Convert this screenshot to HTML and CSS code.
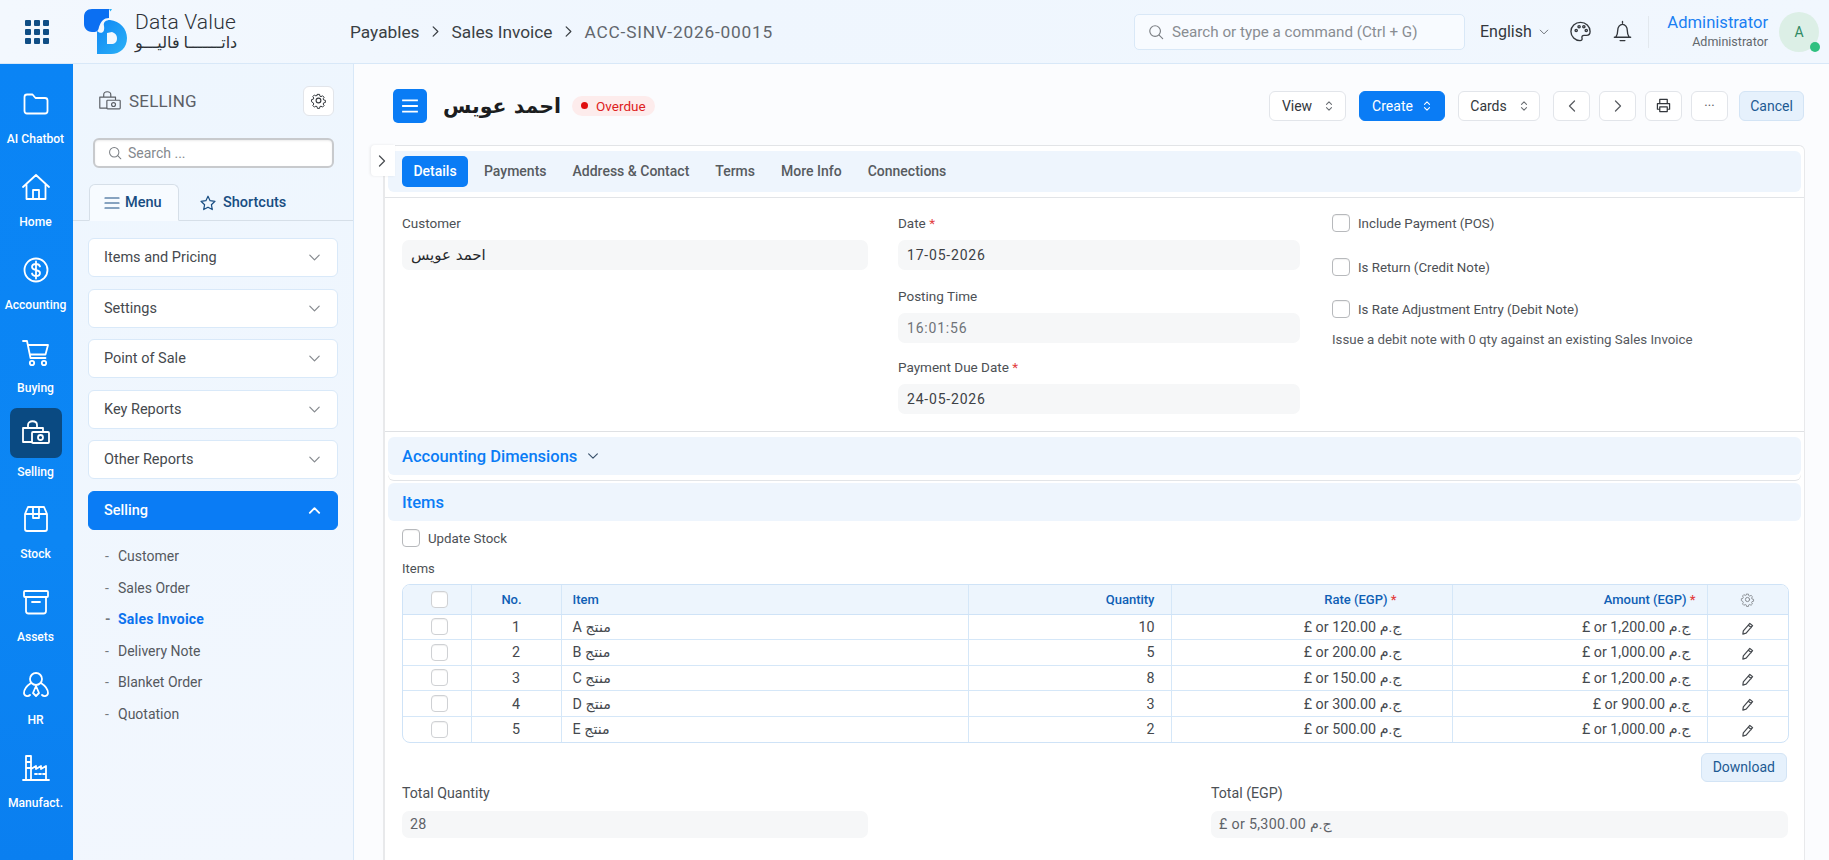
FILE: index.html
```html
<!DOCTYPE html>
<html lang="en">
<head>
    <meta charset="UTF-8">
    <meta name="viewport" content="width=device-width, initial-scale=1.0">
    <title>ACC-SINV-2026-00015</title>
    <link rel="stylesheet" href="styles.css">
</head>
<body>
    <svg class="sprite" aria-hidden="true">
        <symbol id="chev-down" viewBox="0 0 16 16"><path d="M3 5.5l5 5 5-5"/></symbol>
        <symbol id="chev-up" viewBox="0 0 16 16"><path d="M3 10.5l5-5 5 5"/></symbol>
        <symbol id="chev-right" viewBox="0 0 16 16"><path d="M5.5 3l5 5-5 5"/></symbol>
        <symbol id="chev-left" viewBox="0 0 16 16"><path d="M10.5 3l-5 5 5 5"/></symbol>
        <symbol id="updown" viewBox="0 0 12 16"><path d="M3 6l3-3 3 3M3 10l3 3 3-3"/></symbol>
        <symbol id="search" viewBox="0 0 18 18"><circle cx="8" cy="8" r="6"/><path d="M12.5 12.5l4 4"/></symbol>
        <symbol id="gear" viewBox="0 0 20 20"><circle cx="10" cy="10" r="2.8"/><path d="M8.6 2h2.8l.4 2.3 1.5.7 2-1.2 2 2-1.2 2 .6 1.5 2.3.5v2.8l-2.3.5-.6 1.5 1.2 2-2 2-2-1.2-1.5.6-.4 2.3H8.6l-.5-2.3-1.5-.6-2 1.2-2-2 1.2-2-.6-1.5L.9 11.6V8.8l2.3-.5.6-1.5-1.2-2 2-2 2 1.2 1.5-.7z" transform="translate(1 1) scale(.9)"/></symbol>
        <symbol id="pencil" viewBox="0 0 14 14"><path d="M9.5 1.5l3 2.5-7 8-3.5 1 .5-3.5zM8 3.5l3 2.5"/></symbol>
        <symbol id="selling" viewBox="0 0 30 28"><path d="M2 9h20v3M2 9v14h9M7 9V6c0-5 9-5 9 0v3"/><rect x="11" y="13" width="17" height="11" rx="1"/><circle cx="19.5" cy="18.5" r="2.5"/></symbol>
    </svg>

    <header class="topbar">
        <div class="apps-grid">
            <i></i><i></i><i></i><i></i><i></i><i></i><i></i><i></i><i></i>
        </div>
        <div class="logo">
            <svg class="logo-mark" viewBox="0 0 43 45">
                <defs>
                    <linearGradient id="logoD" x1="0" y1="0" x2="1" y2="1">
                        <stop offset="0" stop-color="#0f86f5"/>
                        <stop offset="1" stop-color="#2cb2f6"/>
                    </linearGradient>
                </defs>
                <path fill="#0b6ff2" d="M8 0H25V9C20 9 17 12 15 18C14 23 12 23 8 23C3 23 0 19 0 15V8C0 3 3 0 8 0Z"/>
                <path fill="url(#logoD)" fill-rule="evenodd" d="M13 45V22C18 26 21 23 20 17C19 13 22 11 26 11C36 12 43 20 43 29C43 39 36 45 27 45ZM23 24V35H27C31 35 33 33 33 29C33 26 31 24 28 23Z"/>
                <path fill="#2cb2f6" d="M25 0h3l-1.5 2.5z"/>
            </svg>
            <div class="logo-text">
                <div class="logo-en">Data Value</div>
                <div class="logo-ar">داتـــــــا فاليـــو</div>
            </div>
        </div>
        <nav class="breadcrumb">
            <span>Payables</span>
            <svg class="ico crumb-sep"><use href="#chev-right"/></svg>
            <span>Sales Invoice</span>
            <svg class="ico crumb-sep"><use href="#chev-right"/></svg>
            <span class="crumb-last">ACC-SINV-2026-00015</span>
        </nav>
        <div class="top-search">
            <svg class="ico search-ico"><use href="#search"/></svg>
            <span>Search or type a command (Ctrl + G)</span>
        </div>
        <div class="lang">
            <span>English</span>
            <svg class="ico lang-chev"><use href="#chev-down"/></svg>
        </div>
        <svg class="top-ico palette" viewBox="0 0 24 24">
            <path d="M12 2.5C6.5 2.5 2 6.8 2 12s4.500 9.500 9.500 9.500c1.800 0 2.500-1.200 2.100-2.500-.5-1.600.3-3 2-3h2.600c2.300 0 3.800-1.700 3.800-4C22 6.500 17.500 2.500 12 2.500z"/>
            <circle cx="7.5" cy="11" r="1.2"/><circle cx="10.5" cy="7" r="1.2"/><circle cx="15.5" cy="7" r="1.2"/><circle cx="18" cy="11" r="1.2"/>
        </svg>
        <svg class="top-ico bell" viewBox="0 0 24 24">
            <path d="M12 1.5v2M5 18c1.500-2 2-3.500 2-7 0-3.500 2.200-6.500 5-6.500s5 3 5 6.500c0 3.500.5 5 2 7zM3.500 18h17M9.500 21.500h5"/>
        </svg>
        <div class="top-divider"></div>
        <div class="user">
            <div class="user-name">Administrator</div>
            <div class="user-role">Administrator</div>
        </div>
        <div class="avatar">A<span class="avatar-dot"></span></div>
    </header>

    <div class="app">
        <aside class="rail">
            <a class="rail-item">
                <svg class="rail-ico" viewBox="0 0 28 28"><path d="M2.500 7c0-1.500 1-2.500 2.500-2.500h5.500l3 3.500H23c1.500 0 2.500 1 2.500 2.500V21c0 1.500-1 2.500-2.500 2.500H5c-1.500 0-2.500-1-2.500-2.500z"/></svg>
                <span>AI Chatbot</span>
            </a>
            <a class="rail-item">
                <svg class="rail-ico" viewBox="0 0 28 28"><path d="M1 14L14 2l13 12M4.500 11.500V26h19V11.500M11 26v-9h6v9"/></svg>
                <span>Home</span>
            </a>
            <a class="rail-item">
                <svg class="rail-ico" viewBox="0 0 28 28"><circle cx="14" cy="14" r="11.500"/><path d="M18 10.500c-.5-1.700-2-2.500-4-2.500-2.300 0-4 1.200-4 3s1.700 2.500 4 3 4 1.200 4 3-1.700 3-4 3c-2 0-3.500-.8-4-2.500M14 5.500v17"/></svg>
                <span>Accounting</span>
            </a>
            <a class="rail-item">
                <svg class="rail-ico" viewBox="0 0 28 28"><path d="M1 2h4l3.500 17h15M6 6h20l-2.500 9.500H8"/><circle cx="10" cy="24" r="2.200"/><circle cx="22" cy="24" r="2.200"/></svg>
                <span>Buying</span>
            </a>
            <a class="rail-item active">
                <span class="rail-box"><svg class="rail-ico" viewBox="0 0 30 28"><use href="#selling"/></svg></span>
                <span>Selling</span>
            </a>
            <a class="rail-item">
                <svg class="rail-ico" viewBox="0 0 28 28"><path d="M6 2h16l3 7v15c0 1-.8 2-2 2H5c-1.200 0-2-1-2-2V9zM3 9h22M11 2v11h6V2"/></svg>
                <span>Stock</span>
            </a>
            <a class="rail-item">
                <svg class="rail-ico" viewBox="0 0 28 28"><rect x="2" y="3" width="24" height="6" rx="1"/><path d="M4 9v14c0 1.500 1 2.500 2.500 2.500h15c1.500 0 2.500-1 2.500-2.500V9M10 14h8"/></svg>
                <span>Assets</span>
            </a>
            <a class="rail-item">
                <svg class="rail-ico" viewBox="0 0 28 28"><circle cx="14" cy="8" r="6"/><path d="M9 12c-3 2-7 5-7 10 0 3 4 4 6 2M19 12c3 2 7 5 7 10 0 3-4 4-6 2M14 15l-3 7 3 3 3-3z"/></svg>
                <span>HR</span>
            </a>
            <a class="rail-item">
                <svg class="rail-ico" viewBox="0 0 28 28"><path d="M1 26h26M4 26V2h5v24M4 8h5M4 14h5M9 15l5-3v3l5-3v3l5-3v14M13 20h2M17 20h2M21 20h2"/></svg>
                <span>Manufact.</span>
            </a>
        </aside>

        <aside class="side">
            <div class="side-head">
                <svg class="side-head-ico"><use href="#selling"/></svg>
                <span class="side-title">SELLING</span>
                <button class="side-gear"><svg class="ico gear-ico"><use href="#gear"/></svg></button>
            </div>
            <div class="side-search">
                <svg class="ico search-ico"><use href="#search"/></svg>
                <span>Search ...</span>
            </div>
            <div class="side-tabs">
                <div class="side-tab on">
                    <svg class="ico tab-ico" viewBox="0 0 16 16"><path d="M1 3h14M1 8h14M1 13h14"/></svg>
                    <span>Menu</span>
                </div>
                <div class="side-tab">
                    <svg class="ico tab-ico" viewBox="0 0 16 16"><path d="M8 1.200l2.100 4.500 4.900.6-3.600 3.400.9 4.900L8 12.200l-4.300 2.400.9-4.900L1 6.300l4.900-.6z"/></svg>
                    <span>Shortcuts</span>
                </div>
            </div>
            <div class="acc-list">
                <div class="acc">Items and Pricing<svg class="ico acc-chev"><use href="#chev-down"/></svg></div>
                <div class="acc">Settings<svg class="ico acc-chev"><use href="#chev-down"/></svg></div>
                <div class="acc">Point of Sale<svg class="ico acc-chev"><use href="#chev-down"/></svg></div>
                <div class="acc">Key Reports<svg class="ico acc-chev"><use href="#chev-down"/></svg></div>
                <div class="acc">Other Reports<svg class="ico acc-chev"><use href="#chev-down"/></svg></div>
                <div class="acc open">Selling<svg class="ico acc-chev"><use href="#chev-up"/></svg></div>
            </div>
            <ul class="sub-list">
                <li>Customer</li>
                <li>Sales Order</li>
                <li class="on">Sales Invoice</li>
                <li>Delivery Note</li>
                <li>Blanket Order</li>
                <li>Quotation</li>
            </ul>
        </aside>

        <main class="main">
            <div class="page-head">
                <button class="menu-btn">
                    <svg viewBox="0 0 16 16"><path d="M1 3h14M1 8h14M1 13h14"/></svg>
                </button>
                <h1 class="page-title">احمد عويس</h1>
                <span class="pill"><i></i>Overdue</span>
                <div class="actions">
                    <button class="btn view">View<svg class="ico updown"><use href="#updown"/></svg></button>
                    <button class="btn primary">Create<svg class="ico updown"><use href="#updown"/></svg></button>
                    <button class="btn cards">Cards<svg class="ico updown"><use href="#updown"/></svg></button>
                    <div class="icon-btns">
                        <button class="btn square"><svg class="ico"><use href="#chev-left"/></svg></button>
                        <button class="btn square"><svg class="ico"><use href="#chev-right"/></svg></button>
                        <button class="btn square">
                            <svg class="ico print" viewBox="0 0 16 16"><path d="M4 6V1.500h8V6M4 12H1.500V6h13v6H12M4 9.500h8v5H4z"/></svg>
                        </button>
                        <button class="btn square dots">...</button>
                    </div>
                    <button class="btn soft cancel">Cancel</button>
                </div>
            </div>

            <div class="card">
                <button class="side-toggle"><svg class="ico"><use href="#chev-right"/></svg></button>
                <div class="tabs">
                    <span class="tab on">Details</span>
                    <span class="tab">Payments</span>
                    <span class="tab">Address &amp; Contact</span>
                    <span class="tab">Terms</span>
                    <span class="tab">More Info</span>
                    <span class="tab">Connections</span>
                </div>

                <section class="form-grid">
                    <div>
                        <div class="field">
                            <label>Customer</label>
                            <div class="input ar">احمد عويس</div>
                        </div>
                    </div>
                    <div>
                        <div class="field">
                            <label>Date <em>*</em></label>
                            <div class="input">17-05-2026</div>
                        </div>
                        <div class="field">
                            <label>Posting Time</label>
                            <div class="input muted">16:01:56</div>
                        </div>
                        <div class="field">
                            <label>Payment Due Date <em>*</em></label>
                            <div class="input">24-05-2026</div>
                        </div>
                    </div>
                    <div class="checks">
                        <div class="check"><span class="box"></span>Include Payment (POS)</div>
                        <div class="check"><span class="box"></span>Is Return (Credit Note)</div>
                        <div class="check"><span class="box"></span>Is Rate Adjustment Entry (Debit Note)</div>
                        <p class="help">Issue a debit note with 0 qty against an existing Sales Invoice</p>
                    </div>
                </section>

                <div class="band collapsible">
                    Accounting Dimensions
                    <svg class="ico band-chev"><use href="#chev-down"/></svg>
                </div>

                <div class="band items-band">Items</div>

                <section class="items">
                    <div class="check update"><span class="box"></span>Update Stock</div>
                    <label class="items-label">Items</label>
                    <div class="table-wrap">
                        <table class="grid">
                            <colgroup>
                                <col class="c-check"><col class="c-no"><col class="c-item"><col class="c-qty"><col class="c-rate"><col class="c-amount"><col class="c-edit">
                            </colgroup>
                            <thead>
                                <tr>
                                    <th class="ctr pick"><span class="box"></span></th>
                                    <th class="ctr no">No.</th>
                                    <th>Item</th>
                                    <th class="num">Quantity</th>
                                    <th class="num rate">Rate (EGP) <em>*</em></th>
                                    <th class="num amount">Amount (EGP) <em>*</em></th>
                                    <th class="ctr"><svg class="ico th-gear"><use href="#gear"/></svg></th>
                                </tr>
                            </thead>
                            <tbody>
                                <tr>
                                    <td class="ctr pick"><span class="box"></span></td><td class="ctr">1</td><td>A منتج</td><td class="num">10</td>
                                    <td class="num rate">£ or 120.00 ج.م</td><td class="num">£ or 1,200.00 ج.م</td>
                                    <td class="ctr"><svg class="ico pen"><use href="#pencil"/></svg></td>
                                </tr>
                                <tr>
                                    <td class="ctr pick"><span class="box"></span></td><td class="ctr">2</td><td>B منتج</td><td class="num">5</td>
                                    <td class="num rate">£ or 200.00 ج.م</td><td class="num">£ or 1,000.00 ج.م</td>
                                    <td class="ctr"><svg class="ico pen"><use href="#pencil"/></svg></td>
                                </tr>
                                <tr>
                                    <td class="ctr pick"><span class="box"></span></td><td class="ctr">3</td><td>C منتج</td><td class="num">8</td>
                                    <td class="num rate">£ or 150.00 ج.م</td><td class="num">£ or 1,200.00 ج.م</td>
                                    <td class="ctr"><svg class="ico pen"><use href="#pencil"/></svg></td>
                                </tr>
                                <tr>
                                    <td class="ctr pick"><span class="box"></span></td><td class="ctr">4</td><td>D منتج</td><td class="num">3</td>
                                    <td class="num rate">£ or 300.00 ج.م</td><td class="num">£ or 900.00 ج.م</td>
                                    <td class="ctr"><svg class="ico pen"><use href="#pencil"/></svg></td>
                                </tr>
                                <tr>
                                    <td class="ctr pick"><span class="box"></span></td><td class="ctr">5</td><td>E منتج</td><td class="num">2</td>
                                    <td class="num rate">£ or 500.00 ج.م</td><td class="num">£ or 1,000.00 ج.م</td>
                                    <td class="ctr"><svg class="ico pen"><use href="#pencil"/></svg></td>
                                </tr>
                            </tbody>
                        </table>
                    </div>
                    <div class="grid-foot"><button class="btn soft download">Download</button></div>
                    <div class="totals">
                        <div class="field">
                            <label>Total Quantity</label>
                            <div class="input muted total">28</div>
                        </div>
                        <div class="field">
                            <label>Total (EGP)</label>
                            <div class="input muted total">£ or 5,300.00 ج.م</div>
                        </div>
                    </div>
                </section>
            </div>
        </main>
    </div>
</body>
</html>
```

FILE: styles.css
```css
* {
    margin: 0;
    padding: 0;
    box-sizing: border-box;
}

html, body {
    height: 100%;
}

body {
    font-family: Roboto, "DejaVu Sans", sans-serif;
    font-size: 14px;
    color: #3d4146;
    background: #fbfcfe;
    display: flex;
    flex-direction: column;
    overflow: hidden;
}

.sprite {
    display: none;
}

button {
    font-family: inherit;
    cursor: pointer;
}

.ico {
    width: 16px;
    height: 16px;
    fill: none;
    stroke: currentColor;
    stroke-width: 1.3;
    stroke-linecap: round;
    stroke-linejoin: round;
    flex: none;
}

/* top bar */
.topbar {
    height: 64px;
    flex: none;
    display: flex;
    align-items: center;
    background: linear-gradient(90deg, #f3f8fe 0%, #eff6fe 40%, #f1f7fe 100%);
    border-bottom: 1px solid #d8e8f8;
}

.apps-grid {
    width: 24px;
    margin-left: 25px;
    display: grid;
    grid-template-columns: repeat(3, 6px);
    gap: 3px;
}

.apps-grid i {
    height: 6px;
    background: #104e85;
    border-radius: 1px;
}

.logo {
    display: flex;
    align-items: center;
    margin-left: 35px;
    gap: 8px;
}

.logo-mark {
    width: 43px;
    height: 45px;
}

.logo-text {
    color: #2d3238;
    width: 102px;
}

.logo-en {
    font-size: 21px;
    font-weight: 300;
    line-height: 22px;
    letter-spacing: .2px;
    white-space: nowrap;
}

.logo-ar {
    font-size: 16px;
    line-height: 20px;
    white-space: nowrap;
    text-align: center;
}

.breadcrumb {
    margin-left: 113px;
    display: flex;
    align-items: center;
    font-size: 17.3px;
    color: #3a3f44;
    width: 784px;
    flex: none;
}

.crumb-sep {
    margin: 0 9px 0 8px;
    width: 15px;
    height: 15px;
}

.crumb-last {
    color: #62676d;
    letter-spacing: .8px;
}

.top-search {
    width: 331px;
    height: 36px;
    background: #f8fbff;
    border: 1px solid #d9e8f7;
    border-radius: 5px;
    display: flex;
    align-items: center;
    gap: 8px;
    padding-left: 13px;
    font-size: 15.2px;
    color: #898d92;
    flex: none;
}

.search-ico {
    color: #7b7f84;
}

.lang {
    margin-left: 15px;
    display: flex;
    align-items: center;
    gap: 6px;
    font-size: 16px;
    color: #33373c;
    width: 89px;
    flex: none;
}

.lang-chev {
    width: 12px;
    height: 12px;
    color: #6b7076;
}

.top-ico {
    width: 23px;
    height: 23px;
    fill: none;
    stroke: #33373c;
    stroke-width: 1.4;
    stroke-linecap: round;
    stroke-linejoin: round;
    flex: none;
}

.bell {
    margin-left: 19px;
}

.top-divider {
    width: 1px;
    height: 32px;
    background: #e2e8ee;
    margin-left: 14px;
}

.user {
    width: 119px;
    text-align: right;
}

.user-name {
    font-size: 16.6px;
    line-height: 20px;
    color: #1a7ff2;
    white-space: nowrap;
}

.user-role {
    font-size: 12.5px;
    line-height: 18px;
    color: #62676d;
}

.avatar {
    position: relative;
    width: 40px;
    height: 40px;
    margin-left: 11px;
    border-radius: 50%;
    background: #dcefe6;
    color: #2f8a63;
    display: flex;
    align-items: center;
    justify-content: center;
    font-size: 14px;
}

.avatar-dot {
    position: absolute;
    right: -1px;
    bottom: 0;
    width: 10px;
    height: 10px;
    border-radius: 50%;
    background: #2fc07f;
}

.app {
    flex: 1;
    display: flex;
    min-height: 0;
}

/* icon rail */
.rail {
    width: 73px;
    flex: none;
    background: linear-gradient(180deg, #0a84f5 0%, #0c86f4 60%, #0a7ff0 100%);
    padding: 26px 2px 0 0;
    color: #fff;
}

.rail-item {
    display: flex;
    flex-direction: column;
    align-items: center;
    height: 83px;
    font-size: 12.1px;
    font-weight: 500;
    white-space: nowrap;
}

.rail-ico {
    width: 28px;
    height: 28px;
    fill: none;
    stroke: #fff;
    stroke-width: 1.8;
    stroke-linecap: round;
    stroke-linejoin: round;
    margin-bottom: 14px;
    flex: none;
}

.rail-item.active {
    margin-top: -14px;
    height: 97px;
}

.rail-box {
    width: 52px;
    height: 50px;
    background: #0a4a82;
    border-radius: 7px;
    display: flex;
    align-items: center;
    justify-content: center;
    margin-bottom: 7px;
}

.rail-box .rail-ico {
    margin: 0;
    width: 30px;
}

/* module sidebar */
.side {
    width: 281px;
    flex: none;
    background: linear-gradient(170deg, #eef6fe 0%, #f2f7fe 100%);
    border-right: 1px solid #d8e8f8;
}

.side-head {
    display: flex;
    align-items: center;
    height: 29px;
    margin: 22px 19px 0 25px;
}

.side-head-ico {
    width: 24px;
    height: 22px;
    fill: none;
    stroke: #5c6066;
    stroke-width: 1.5;
    stroke-linecap: round;
    stroke-linejoin: round;
    flex: none;
}

.side-title {
    margin-left: 7px;
    font-size: 17px;
    color: #5c6066;
    letter-spacing: .2px;
}

.side-gear {
    margin-left: auto;
    width: 31px;
    height: 30px;
    background: #fff;
    border: 1px solid #e2e5ea;
    border-radius: 6px;
    display: flex;
    align-items: center;
    justify-content: center;
    color: #33373c;
}

.gear-ico {
    width: 17px;
    height: 17px;
}

.side-search {
    margin: 23px 19px 0 20px;
    height: 30px;
    background: #fff;
    border: 2px solid #c8cacd;
    border-radius: 6px;
    display: flex;
    align-items: center;
    gap: 6px;
    padding-left: 13px;
    font-size: 14px;
    color: #85898e;
    box-shadow: inset 0 1px 2px rgba(0,0,0,.08);
}

.side-search .ico {
    width: 14px;
    height: 14px;
}

.side-tabs {
    display: flex;
    margin-top: 16px;
    padding-left: 16px;
    height: 37px;
    border-bottom: 1px solid #d6dfe8;
}

.side-tab {
    display: flex;
    align-items: center;
    gap: 7px;
    height: 37px;
    padding: 0 21px 0 14px;
    font-size: 14.5px;
    font-weight: 500;
    color: #184d82;
}

.side-tab.on {
    width: 90px;
    gap: 5px;
    background: #f7fbff;
    border: 1px solid #d6dfe8;
    border-bottom-color: #f7fbff;
    border-radius: 6px 6px 0 0;
}

.tab-ico {
    width: 16px;
    height: 16px;
    stroke-width: 1.2;
}

.side-tab + .side-tab {
    padding-left: 21px;
}

.acc-list {
    margin: 17px 15px 0;
}

.acc {
    height: 39px;
    margin-bottom: 11.5px;
    background: #fff;
    border: 1px solid #d9e9f9;
    border-radius: 6px;
    display: flex;
    align-items: center;
    justify-content: space-between;
    padding: 0 15px;
    font-size: 14.5px;
    color: #45494e;
}

.acc-chev {
    color: #85898e;
    width: 15px;
    height: 15px;
}

.acc.open {
    background: #0a7cf5;
    border-color: #0a7cf5;
    color: #fff;
    font-weight: 500;
}

.acc.open .acc-chev {
    color: #fff;
    stroke-width: 2;
}

.sub-list {
    list-style: none;
    margin: 7px 0 0 32px;
}

.sub-list li {
    height: 31.6px;
    line-height: 31.6px;
    font-size: 14px;
    color: #55595e;
}

.sub-list li:before {
    content: "-";
    display: inline-block;
    width: 13px;
    color: #75797e;
}

.sub-list li.on {
    color: #0a72ee;
    font-weight: 700;
    letter-spacing: .2px;
}

/* main area */
.main {
    flex: 1;
    min-width: 0;
}

.page-head {
    height: 81px;
    padding: 2px 25px 0 39px;
    display: flex;
    align-items: center;
}

.menu-btn {
    width: 34px;
    height: 34px;
    background: #0a7cf5;
    border: none;
    border-radius: 5px;
    display: flex;
    align-items: center;
    justify-content: center;
}

.menu-btn svg {
    width: 18px;
    height: 18px;
    fill: none;
    stroke: #fff;
    stroke-width: 1.6;
}

.page-title {
    margin-left: 16px;
    font-size: 20.5px;
    font-weight: 700;
    color: #1b1d20;
    font-family: "DejaVu Sans", sans-serif;
}

.pill {
    margin-left: 11px;
    height: 20px;
    padding: 0 9px;
    background: #fdecec;
    border-radius: 10px;
    display: flex;
    align-items: center;
    gap: 8px;
    font-size: 13.5px;
    color: #dd2020;
}

.pill i {
    width: 7px;
    height: 7px;
    border-radius: 50%;
    background: #e01010;
}

.actions {
    margin-left: auto;
    display: flex;
    gap: 13px;
}

.icon-btns {
    display: flex;
    gap: 9px;
    margin-right: -2px;
}

.btn {
    height: 30px;
    padding: 0 12px 0 13px;
    background: #fff;
    border: 1px solid #e2e5ea;
    border-radius: 6px;
    display: flex;
    align-items: center;
    justify-content: center;
    gap: 9px;
    font-size: 14px;
    color: #33373c;
}

.btn.view {
    width: 77px;
    gap: 12px;
}

.btn.cards {
    width: 82px;
    gap: 12px;
}

.updown {
    width: 10px;
    height: 14px;
    color: #6a6e73;
}

.btn.primary {
    width: 86px;
    padding: 0;
    background: #0a7cf5;
    border-color: #0a7cf5;
    color: #fff;
}

.btn.primary .updown {
    color: #fff;
}

.btn.square {
    width: 37px;
    padding: 0;
    color: #5a5e63;
}

.btn.square .print {
    color: #33373c;
    width: 15px;
    height: 15px;
}

.dots {
    align-items: flex-start;
    line-height: 20px;
    font-size: 13px;
}

.btn.soft {
    background: #e6f1fc;
    border-color: #d3e4f5;
    color: #1d5a93;
}

.btn.cancel {
    width: 65px;
    padding: 0;
}

.card {
    position: relative;
    margin: 0 24px 0 29px;
    background: #fff;
    border-top: 1px solid #e2e4e7;
    border-left: 2px solid #e8e9eb;
    border-right: 1px solid #e8e9eb;
    border-radius: 6px 6px 0 0;
    height: 715px;
}

.side-toggle {
    position: absolute;
    left: -14px;
    top: -1px;
    width: 24px;
    height: 31px;
    padding-right: 2px;
    background: #fff;
    border: none;
    border-radius: 4px 0 0 4px;
    box-shadow: -1px 0 3px rgba(0,0,0,.08);
    display: flex;
    align-items: center;
    justify-content: center;
    color: #4c5055;
}

.tabs {
    height: 41px;
    margin: 5px 3px 0;
    padding-left: 14px;
    background: #eef5fd;
    border-radius: 6px;
    display: flex;
    align-items: center;
    gap: 1px;
}

.tab {
    padding: 0 12px 0 13px;
    height: 31px;
    line-height: 31px;
    font-size: 14px;
    color: #575b60;
    font-weight: 500;
    border-radius: 5px;
}

.tab.on {
    width: 66px;
    margin-right: 2px;
    padding: 0;
    text-align: center;
    background: #0a7cf5;
    color: #fff;
}

.form-grid {
    margin-top: 5px;
    border-top: 1px solid #e2e4e7;
    border-bottom: 1px solid #dfe1e4;
    height: 235px;
    padding: 15px 17px 0;
    display: grid;
    grid-template-columns: 466px 402px 1fr;
    column-gap: 30px;
}

.field {
    margin-bottom: 15px;
}

.field:first-child {
    margin-bottom: 16px;
}

.field:nth-child(2) {
    margin-bottom: 14px;
}

.field label {
    display: block;
    height: 20px;
    line-height: 20px;
    font-size: 13.5px;
    color: #4c5055;
    margin-bottom: 7px;
}

em {
    color: #e24040;
    font-style: normal;
}

.input {
    height: 30px;
    line-height: 30px;
    padding: 0 9px;
    background: #f6f7f8;
    border-radius: 7px;
    font-size: 14px;
    color: #3d4146;
    letter-spacing: .8px;
}

.input.ar {
    font-family: "DejaVu Sans", sans-serif;
    letter-spacing: 0;
    font-size: 15px;
    color: #26282b;
}

.input.muted {
    color: #6f7378;
}

.checks {
    padding-top: 1px;
    padding-left: 2px;
}

.check {
    display: flex;
    align-items: center;
    gap: 8px;
    height: 18px;
    font-size: 13.3px;
    color: #4c5055;
    margin-bottom: 26px;
}

.check + .check + .check {
    margin-bottom: 13px;
}

.check:first-child + .check {
    margin-bottom: 24px;
}

.box {
    display: inline-block;
    width: 18px;
    height: 18px;
    background: #fff;
    border: 1px solid #b7b9bc;
    border-radius: 4px;
    box-shadow: inset 0 1px 1px rgba(0,0,0,.06);
    flex: none;
}

.help {
    font-size: 13.3px;
    line-height: 18px;
    color: #55595e;
}

.band {
    margin: 5px 3px 0;
    height: 38px;
    padding-left: 14px;
    background: #eef5fd;
    border-radius: 6px;
    display: flex;
    align-items: center;
    font-size: 16.5px;
    font-weight: 500;
    color: #0a7cf5;
}

.band-chev {
    margin-left: 9px;
    width: 14px;
    height: 14px;
    color: #38506a;
}

.collapsible {
    box-shadow: 0 5px 0 #fff, 0 6px 0 #e2e4e7;
}

.items-band {
    margin-top: 8px;
    height: 38px;
}

.items {
    padding: 8px 15px 0 17px;
}

.update {
    margin-bottom: 0;
}

.items-label {
    display: block;
    margin-top: 12px;
    height: 20px;
    line-height: 20px;
    font-size: 13px;
    color: #4c5055;
}

.table-wrap {
    margin-top: 5px;
    border: 1px solid #cfe3f7;
    border-radius: 8px;
    overflow: hidden;
}

.grid {
    width: 100%;
    table-layout: fixed;
    border-collapse: collapse;
}

.c-check { width: 68px; }
.c-no { width: 90px; }
.c-item { width: 407px; }
.c-qty { width: 203px; }
.c-rate { width: 281px; }
.c-amount { width: 255px; }

.grid th {
    height: 29px;
    background: #edf5fd;
    color: #0f5fb5;
    font-size: 13px;
    font-weight: 500;
    text-align: left;
    padding: 0 11px;
    border-right: 1px solid #d5e7f8;
    border-bottom: 1px solid #cfe3f7;
}

.grid td {
    height: 25.6px;
    padding: 0 11px;
    font-size: 14.3px;
    color: #45494e;
    border-right: 1px solid #d5e7f8;
    border-bottom: 1px solid #d5e7f8;
}

.grid th:last-child, .grid td:last-child {
    border-right: none;
}

.grid tr:last-child td {
    border-bottom: none;
}

.grid .ctr {
    text-align: center;
}

.grid .pick {
    padding: 0 0 0 6px;
}

.grid .no {
    padding-right: 20px;
}

.grid .num {
    text-align: right;
    padding-right: 16px;
}

.grid th.rate {
    padding-right: 55px;
}

.grid td.rate {
    padding-right: 50px;
}

.grid .num.amount {
    padding-right: 11px;
}

.grid .box {
    display: block;
    margin: 0 auto;
    width: 17px;
    height: 17px;
    border-color: #cfd1d4;
}

.th-gear {
    width: 15px;
    height: 15px;
    color: #85898e;
    vertical-align: middle;
}

.pen {
    width: 13px;
    height: 13px;
    color: #45494e;
    vertical-align: middle;
}

.grid-foot {
    display: flex;
    justify-content: flex-end;
    margin-top: 10px;
    padding-right: 2px;
}

.btn.download {
    height: 29px;
    padding: 0 11px;
    font-size: 14px;
}

.totals {
    display: grid;
    grid-template-columns: 466px 577px;
    justify-content: space-between;
    margin: 1px 1px 0 0;
}

.totals label {
    font-size: 14.2px;
    margin-bottom: 8px;
}

.input.total {
    height: 27px;
    line-height: 27px;
    padding: 0 8px;
    font-size: 14.3px;
    letter-spacing: .3px;
    color: #5f6368;
}
```
